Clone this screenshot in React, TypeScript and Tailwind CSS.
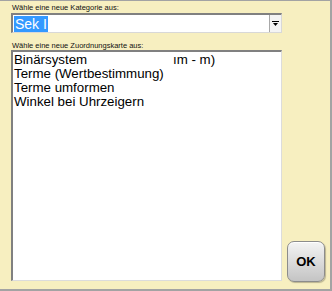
import React from 'react';

const items = ['Binärsystem', 'Terme (Wertbestimmung)', 'Terme umformen', 'Winkel bei Uhrzeigern'];

// Auswahldialog für Kategorie und Zuordnungskarte
export default function App() {
  return (
    <div
      className="w-[332px] h-[291px] bg-[#f7efc0] border-t border-r-2 border-b-2 border-[#a3a3a3] pl-[11px] pt-[2px] flex flex-col"
      style={{ fontFamily: '"Liberation Sans", Arial, sans-serif' }}
    >
      <div className="text-[7.5px] leading-[10px] h-[10px] text-[#111] pl-[1px]">Wähle eine neue Kategorie aus:</div>
      <div className="w-[271px] h-[20px] bg-white border-t-2 border-l-2 border-r border-b border-t-[#808080] border-l-[#808080] border-r-[#d8d8d8] border-b-[#d8d8d8] flex items-center">
        <div className="flex-1 pl-[1px]">
          <span className="bg-[#3399ff] text-white text-[14px] leading-[15px] px-[1px]">Sek I</span>
        </div>
        <div className="w-[12px] h-full bg-[#f4f4f4] border-l border-[#a8a8a8] flex items-center justify-center">
          <svg width="7" height="6" viewBox="0 0 7 6">
            <rect x="0" y="0" width="7" height="1" fill="#000" />
            <path d="M1 2 H6 L3.5 5 Z" fill="#000" />
          </svg>
        </div>
      </div>
      <div className="mt-[8px] text-[7.5px] leading-[9px] h-[9px] text-[#111] pl-[1px]">Wähle eine neue Zuordnungskarte aus:</div>
      <div className="flex items-end">
        <div className="w-[271px] h-[231px] bg-white border-t-2 border-l-2 border-r border-b border-t-[#808080] border-l-[#808080] border-r-[#dcdcdc] border-b-[#dcdcdc] pt-[1px] pl-[1px] text-[13.3px] leading-[14px] text-black">
          <div className="flex">
            <span className="w-[159px]">{items[0]}</span>
            <span>ım - m)</span>
          </div>
          {items.slice(1).map((t) => (
            <div key={t}>{t}</div>
          ))}
        </div>
        <button className="ml-[5px] mb-[-1px] w-[38px] h-[41px] rounded-[7px] border border-[#8c8c8c] bg-gradient-to-b from-[#f4f4f4] via-[#dcdcdc] to-[#c4c4c4] shadow-[inset_0_1px_0_#ffffff,1px_1px_1px_rgba(0,0,0,0.25)] text-[13px] font-bold text-black flex items-center justify-center">
          OK
        </button>
      </div>
    </div>
  );
}
